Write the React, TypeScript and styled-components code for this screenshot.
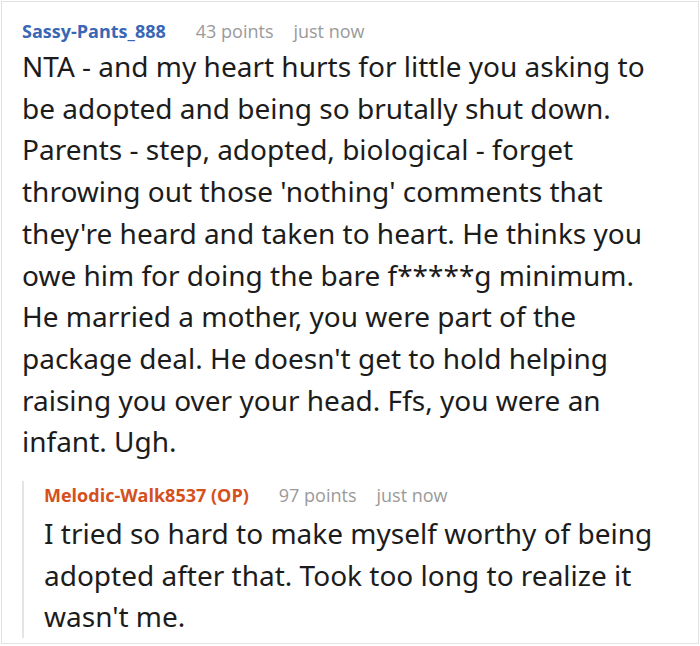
import React from 'react'
import styled, { createGlobalStyle } from 'styled-components'

const GlobalStyle = createGlobalStyle`
  html, body {
    margin: 0;
    padding: 0;
    background: #ffffff;
  }
  body {
    font-family: "Open Sans", "Noto Sans", "Liberation Sans", sans-serif;
    color: #1c1c1c;
  }
`

interface IComment {
    author: string
    points: number
    time: string
    op?: boolean
    lines: string[]
    replies?: IComment[]
}

const thread: IComment = {
    author: 'Sassy-Pants_888',
    points: 43,
    time: 'just now',
    lines: [
        'NTA - and my heart hurts for little you asking to',
        'be adopted and being so brutally shut down.',
        'Parents - step, adopted, biological - forget',
        "throwing out those 'nothing' comments that",
        "they're heard and taken to heart. He thinks you",
        'owe him for doing the bare f*****g minimum.',
        'He married a mother, you were part of the',
        "package deal. He doesn't get to hold helping",
        'raising you over your head. Ffs, you were an',
        'infant. Ugh.',
    ],
    replies: [
        {
            author: 'Melodic-Walk8537',
            op: true,
            points: 97,
            time: 'just now',
            lines: [
                'I tried so hard to make myself worthy of being',
                'adopted after that. Took too long to realize it',
                "wasn't me.",
            ],
        },
    ],
}

const Comment: React.FC<{ comment: IComment; nested?: boolean }> = ({ comment, nested }) => {
    return (
        <CommentBox $nested={nested}>
            <Meta>
                <Author $op={comment.op}>
                    {comment.author}{comment.op && ' (OP)'}
                </Author>
                <Points>{comment.points} points</Points>
                <Time>{comment.time}</Time>
            </Meta>
            <Body $nested={nested}>
                {comment.lines.map((line, i) => (
                    <React.Fragment key={i}>
                        {line}
                        {i < comment.lines.length - 1 && <br />}
                    </React.Fragment>
                ))}
            </Body>
            {comment.replies && comment.replies.map((reply, i) => (
                <Comment key={i} comment={reply} nested />
            ))}
        </CommentBox>
    )
}

export default function App() {
    return (
        <>
            <GlobalStyle />
            <Frame>
                <Comment comment={thread} />
            </Frame>
        </>
    )
}

const Frame = styled.div`
  box-sizing: border-box;
  margin: 1px 0 0 1px;
  width: 698px;
  height: 643px;
  border: 1px solid #e2e2e2;
  padding: 15px 4px 0 20px;
  overflow: hidden;
`

const CommentBox = styled.div<{ $nested?: boolean }>`
  display: flex;
  flex-direction: column;
  ${p => p.$nested && `
    margin-top: 18px;
    border-left: 2px solid #e4e4e4;
    padding-left: 20px;
  `}
`

const Meta = styled.div`
  display: flex;
  align-items: baseline;
  font-size: 18px;
  line-height: 28px;
`

const Author = styled.span<{ $op?: boolean }>`
  font-weight: 700;
  color: ${p => (p.$op ? '#d4501c' : '#3a67b5')};
  margin-right: 30px;
`

const Points = styled.span`
  color: #9a9a9a;
  margin-right: 20px;
`

const Time = styled.span`
  color: #9a9a9a;
`

const Body = styled.p<{ $nested?: boolean }>`
  margin: ${p => (p.$nested ? '4px' : '1px')} 0 0;
  font-family: "Noto Sans", "Open Sans", sans-serif;
  font-size: 28px;
  line-height: 41.7px;
  white-space: nowrap;
`
